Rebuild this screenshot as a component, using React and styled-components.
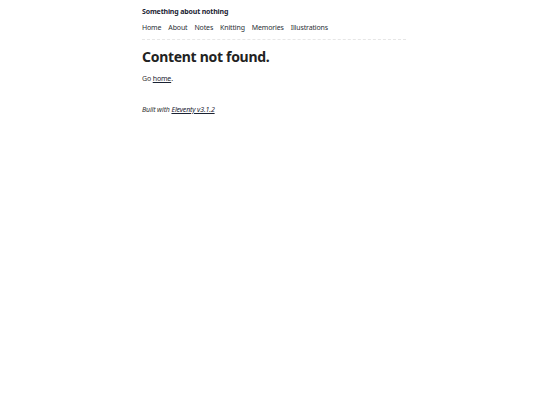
import React from "react";
import styled, { createGlobalStyle } from "styled-components";

const Global = createGlobalStyle`
  html, body { margin: 0; padding: 0; background: #fff; }
  body { font-family: "Noto Sans", "Open Sans", sans-serif; color: #222; -webkit-font-smoothing: antialiased; }
  * { box-sizing: border-box; }
`;

const Page = styled.div`
  width: 264px;
  margin: 0 0 0 142px;
  display: flex;
  flex-direction: column;
`;

const Header = styled.header`
  display: flex;
  flex-direction: column;
  gap: 6px;
  padding-top: 7px;
  padding-bottom: 6px;
  border-bottom: 1px dashed #e6e6e6;
`;

const SiteTitle = styled.a`
  font-size: 7px;
  font-weight: 700;
  letter-spacing: -0.15px;
  color: #1b2333;
  text-decoration: none;
  line-height: 10px;
`;

const Nav = styled.nav`
  display: flex;
  gap: 7px;
`;

const NavLink = styled.a`
  font-size: 7px;
  letter-spacing: -0.15px;
  color: #2b2f36;
  text-decoration: none;
  line-height: 10px;
`;

const Main = styled.main`
  display: flex;
  flex-direction: column;
`;

const Heading = styled.h1`
  margin: 8px 0 0;
  font-size: 14px;
  font-weight: 700;
  letter-spacing: -0.3px;
  line-height: 18px;
  color: #222;
`;

const Para = styled.p`
  margin: 8px 0 0;
  font-size: 7px;
  letter-spacing: -0.15px;
  line-height: 10px;
  color: #333;
`;

const Link = styled.a`
  color: #1b2333;
  text-decoration: underline;
`;

const Footer = styled.footer`
  margin-top: 21px;
  font-size: 7px;
  letter-spacing: -0.15px;
  line-height: 10px;
  font-style: italic;
  color: #333;
`;

export default function App() {
  const links = ["Home", "About", "Notes", "Knitting", "Memories", "Illustrations"];
  return (
    <>
      <Global />
      <Page>
        <Header>
          <SiteTitle href="#">Something about nothing</SiteTitle>
          <Nav>
            {links.map((l) => (
              <NavLink key={l} href="#">{l}</NavLink>
            ))}
          </Nav>
        </Header>
        <Main>
          <Heading>Content not found.</Heading>
          <Para>
            Go <Link href="#">home</Link>.
          </Para>
        </Main>
        <Footer>
          Built with <Link href="#">Eleventy v3.1.2</Link>
        </Footer>
      </Page>
    </>
  );
}
